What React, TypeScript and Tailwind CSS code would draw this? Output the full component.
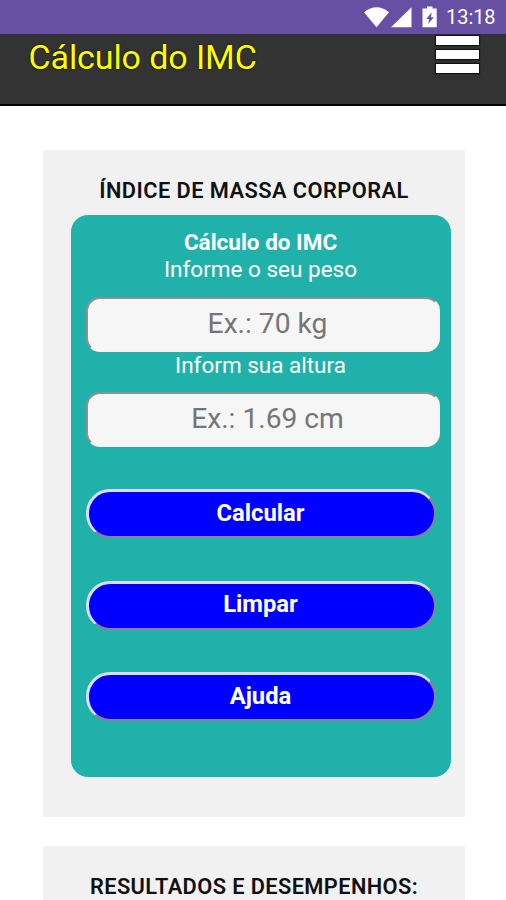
import React from "react";

function StatusBar() {
  return (
    <div className="flex h-[34px] items-center justify-end bg-[#6750a4] pr-[10px] text-white">
      <svg className="h-[34px] w-[78px]" viewBox="0 0 78 34" fill="#fff">
        <path d="M2 12.200Q14.500 2.200 27 12.200L14.500 27.300Z" />
        <path d="M49.500 7.200V27.300H29Z" />
        <path
          fillRule="evenodd"
          d="M65 6.500h5.500v2h4.200v18.800h-14.200V8.500h4.500zM69.800 12.300l-5.600 6.700h3l-1 5 5.600-6.700h-3z"
        />
      </svg>
      <span className="ml-[6px] w-[50px] whitespace-nowrap text-[20px] leading-[36px] tracking-[-0.05px]">13:18</span>
    </div>
  );
}

function Header() {
  return (
    <header className="flex h-[72px] items-start justify-between border-b-2 border-black bg-[#333] pl-[28.500px] pr-[27px]">
      <h1 className="whitespace-nowrap text-[34px] leading-[46px] tracking-[-0.1px] text-[#ff0] [text-shadow:0_0_2px_#000]">
        Cálculo do IMC
      </h1>
      <div className="flex flex-col gap-[5px] pt-[2px]">
        <div className="h-[9px] w-[43px] bg-white shadow-[0_0_1px_1px_#111]" />
        <div className="h-[9px] w-[43px] bg-white shadow-[0_0_1px_1px_#111]" />
        <div className="h-[9px] w-[43px] bg-white shadow-[0_0_1px_1px_#111]" />
      </div>
    </header>
  );
}

function Field({ placeholder }: { placeholder: string }) {
  return (
    <input
      className="block h-[55px] w-[354px] rounded-[14px] border-2 border-t-[#909090] border-l-[#909090] border-b-[#f4f4f4] border-r-[#f4f4f4] bg-[#f6f6f6] pb-[2px] pl-[10px] text-center text-[28.200px] text-[#757575] placeholder:text-[#757575]"
      placeholder={placeholder}
    />
  );
}

function ActionButton({ label }: { label: string }) {
  return (
    <button className="block h-[49px] w-[350px] rounded-[24px] border-[3px] border-b-2 border-r-2 border-t-[#dcdcec] border-l-[#dcdcec] border-b-[#8c8094] border-r-[#8c8094] bg-[#00f] pb-[3px] pr-[1px] text-center text-[23.800px] font-bold leading-[40px] text-white">
      {label}
    </button>
  );
}

export default function App() {
  return (
    <div className="h-[900px] w-[506px] overflow-hidden bg-white font-['Roboto',sans-serif]">
      <StatusBar />
      <Header />
      <main className="ml-[43px] mt-[44px] w-[422px]">
        <section className="h-[667px] bg-[#f1f1f1] pl-[28px] pt-[27px]">
          <h2 className="h-[38px] w-[366px] whitespace-nowrap text-center text-[21.800px] font-semibold leading-[28px] tracking-[0.45px] text-[#111]">
            ÍNDICE DE MASSA CORPORAL
          </h2>
          <div className="h-[562px] w-[379.500px] rounded-[17px] bg-[#20b2aa] pl-[14.500px] pt-[14px]">
            <div className="w-[350px] text-center text-[22.500px] leading-[27px] text-white">
              <p className="font-bold">Cálculo do IMC</p>
              <p>Informe o seu peso</p>
            </div>
            <div className="pt-[14px]">
              <Field placeholder="Ex.: 70 kg" />
            </div>
            <p className="h-[40px] w-[350px] text-center text-[22.500px] leading-[27px] text-white">Inform sua altura</p>
            <Field placeholder="Ex.: 1.69 cm" />
            <div className="mt-[42px] flex flex-col gap-[42.500px]">
              <ActionButton label="Calcular" />
              <ActionButton label="Limpar" />
              <ActionButton label="Ajuda" />
            </div>
          </div>
        </section>
        <section className="mt-[29px] h-[60px] bg-[#f1f1f1] pt-[27px]">
          <h2 className="whitespace-nowrap text-center text-[21.800px] font-semibold leading-[28px] tracking-[0.4px] text-[#111]">
            RESULTADOS E DESEMPENHOS:
          </h2>
        </section>
      </main>
    </div>
  );
}
